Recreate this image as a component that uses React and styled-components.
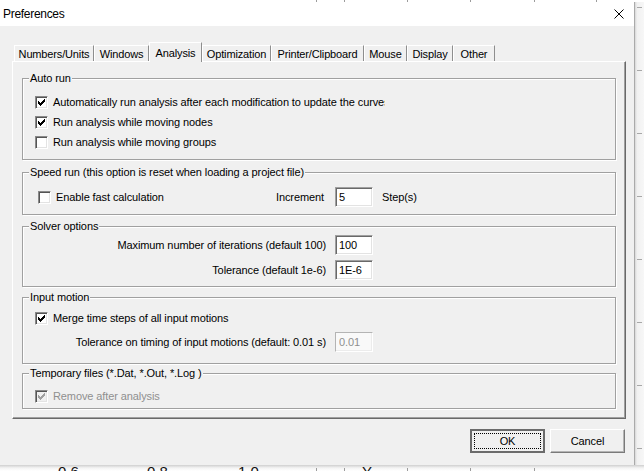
import React from 'react';
import styled, { createGlobalStyle } from 'styled-components';

const GlobalStyle = createGlobalStyle`
  html, body {
    margin: 0;
    padding: 0;
    background: #fff;
  }
  body {
    font-family: "Liberation Sans", Arial, sans-serif;
  }
`;

const Page = styled.div`
  width: 644px;
  height: 471px;
  overflow: hidden;
  display: grid;
  grid-template-columns: 635px 9px;
  grid-template-rows: 2px 463px 6px;
`;

const Edge = styled.svg`
  grid-column: 1 / 3;
  display: block;
`;

const Side = styled.svg`
  display: block;
  background: linear-gradient(to right, #d6d6d6, #f1f1f1 2px, #f7f7f7);
`;

const Dialog = styled.div`
  display: flex;
  flex-direction: column;
  background: #f0f0f0;
  border-right: 1px solid #aaaaaa;
  font-size: 11px;
  letter-spacing: -0.1px;
  color: #000;
`;

const TitleBar = styled.div`
  height: 24px;
  flex: none;
  background: #fff;
  display: flex;
  align-items: center;
  justify-content: space-between;
  padding: 0 10px 0 3px;
  font-size: 12px;
  letter-spacing: -0.3px;
`;

const Body = styled.div`
  flex: 1;
  display: flex;
  flex-direction: column;
  padding: 16px 8px 12px 12px;
`;

const TabRow = styled.div`
  display: flex;
  align-items: flex-end;
  height: 19px;
  padding-left: 2px;
  position: relative;
  z-index: 1;
`;

const Tab = styled.div`
  box-sizing: border-box;
  width: ${p => p.$w}px;
  height: ${p => (p.$active ? 20 : 16)}px;
  margin-bottom: ${p => (p.$active ? -1 : 0)}px;
  border-top: 1px solid #fff;
  border-left: 1px solid #fff;
  border-right: 1px solid #8e8e8e;
  background: #f0f0f0;
  display: flex;
  align-items: center;
  justify-content: center;
  white-space: nowrap;
  letter-spacing: -0.15px;
`;

const Panel = styled.div`
  box-sizing: border-box;
  height: 358px;
  border-top: 1px solid #fff;
  border-left: 1px solid #fff;
  border-right: 1px solid #696969;
  border-bottom: 1px solid #696969;
  box-shadow: inset -1px -1px 0 #a0a0a0;
  padding: 16px 9px 0 9px;
`;

const Group = styled.div`
  position: relative;
  margin-top: ${p => p.$mt || 0}px;
  border: 1px solid #a0a0a0;
  box-shadow: inset 1px 1px 0 #fff, 1px 1px 0 #fff;
  padding: ${p => p.$pad};
`;

const Caption = styled.div`
  position: absolute;
  top: -8px;
  left: 6px;
  padding: 0 1px;
  line-height: 14px;
  background: #f0f0f0;
  white-space: nowrap;
`;

const CheckRow = styled.div`
  display: flex;
  align-items: center;
  gap: 5px;
  height: 20px;
  padding-left: ${p => p.$indent ?? 12}px;
  width: ${p => (p.$w ? `${p.$w}px` : 'auto')};
  overflow: hidden;
  white-space: nowrap;
  color: ${p => (p.$disabled ? '#8f8f8f' : '#000')};
`;

const Box = styled.span`
  flex: none;
  box-sizing: border-box;
  width: 13px;
  height: 13px;
  border: 1px solid;
  border-color: #8a8a8a #fff #fff #8a8a8a;
  box-shadow: inset 1px 1px 0 #555, inset -1px -1px 0 #e3e3e3;
  background: ${p => (p.$disabled ? '#f0f0f0' : '#fff')};
  color: ${p => (p.$disabled ? '#a0a0a0' : '#000')};
  display: flex;
  align-items: center;
  justify-content: center;
`;

const FieldRow = styled.div`
  display: grid;
  grid-template-columns: 303px 38px auto;
  column-gap: 9px;
  align-items: center;
  height: 20px;
  margin-top: ${p => p.$mt || 0}px;
`;

const FieldLabel = styled.div`
  text-align: right;
  white-space: nowrap;
`;

const SplitCell = styled.div`
  display: flex;
  align-items: center;
  justify-content: space-between;
  padding-right: 2px;
`;

const Input = styled.input`
  box-sizing: border-box;
  width: 38px;
  height: 20px;
  margin: 0;
  padding: 0 0 0 3px;
  border: 1px solid;
  border-color: ${p => (p.disabled ? '#b4b4b4 #fff #fff #b4b4b4' : '#a0a0a0 #fff #fff #a0a0a0')};
  box-shadow: ${p =>
    p.disabled ? 'inset -1px -1px 0 #ececec' : 'inset 1px 1px 0 #696969, inset -1px -1px 0 #e3e3e3'};
  background: ${p => (p.disabled ? '#f9f9f9' : '#fff')};
  font: inherit;
  letter-spacing: inherit;
  color: #000;
  outline: none;
  &:disabled {
    color: #8f8f8f;
  }
`;

const ButtonRow = styled.div`
  display: flex;
  justify-content: flex-end;
  gap: 5px;
  margin: 10px 1px 0 0;
`;

const Button = styled.button`
  box-sizing: border-box;
  width: 75px;
  height: 24px;
  margin: 0;
  padding: 0;
  font: inherit;
  letter-spacing: inherit;
  color: #000;
  background: #f0f0f0;
  border: ${p => (p.$default ? '2px solid #6b6b6b' : '1px solid')};
  border-color: ${p => (p.$default ? '#6b6b6b' : '#fff #7a7a7a #7a7a7a #fff')};
  box-shadow: ${p => (p.$default ? 'none' : 'inset -1px -1px 0 #b4b4b4')};
  outline: ${p => (p.$default ? '1px dotted #000' : 'none')};
  outline-offset: -5px;
`;

const CHECK = ['......#', '.....##', '#...###', '##.###.', '#####..', '.###...', '..#....'];

function CheckMark() {
  return (
    <svg width="7" height="7" shapeRendering="crispEdges" fill="currentColor">
      {CHECK.flatMap((row, y) =>
        [...row].map((c, x) =>
          c === '#' ? <rect key={`${x}-${y}`} x={x} y={y} width="1" height="1" /> : null
        )
      )}
    </svg>
  );
}

function Check({ checked, disabled, label, indent, w }) {
  return (
    <CheckRow $indent={indent} $w={w} $disabled={disabled}>
      <Box $disabled={disabled}>{checked && <CheckMark />}</Box>
      <span>{label}</span>
    </CheckRow>
  );
}

const tabs = [
  ['Numbers/Units', 80],
  ['Windows', 55],
  ['Analysis', 53, true],
  ['Optimization', 69],
  ['Printer/Clipboard', 93],
  ['Mouse', 43],
  ['Display', 46],
  ['Other', 42],
];

const gridX = [316, 344, 407, 470, 534, 596];
const sideTicks = [5, 68, 131, 194, 257, 320, 383, 446];

function App() {
  return (
    <>
      <GlobalStyle />
      <Page>
        <Edge width="644" height="2">
          {gridX.map(x => (
            <rect key={x} x={x} y="0" width="1" height="2" fill="#9c9c9c" />
          ))}
        </Edge>

        <Dialog>
          <TitleBar>
            <span>Preferences</span>
            <svg width="10" height="10" viewBox="0 0 10 10">
              <path d="M0.5 0.5 L9.5 9.5 M9.5 0.5 L0.5 9.5" stroke="#000" strokeWidth="1" />
            </svg>
          </TitleBar>

          <Body>
            <TabRow>
              {tabs.map(([name, w, active]) => (
                <Tab key={name} $w={w} $active={active}>
                  {name}
                </Tab>
              ))}
            </TabRow>

            <Panel>
              <Group $pad="13px 0 7px">
                <Caption>Auto run</Caption>
                <Check checked w={350} label="Automatically run analysis after each modification to update the curves" />
                <Check checked label="Run analysis while moving nodes" />
                <Check label="Run analysis while moving groups" />
              </Group>

              <Group $mt={12} $pad="14px 0 7px">
                <Caption>Speed run (this option is reset when loading a project file)</Caption>
                <FieldRow>
                  <SplitCell>
                    <Check indent={15} label="Enable fast calculation" />
                    <span>Increment</span>
                  </SplitCell>
                  <Input defaultValue="5" />
                  <span>Step(s)</span>
                </FieldRow>
              </Group>

              <Group $mt={11} $pad="8px 0 6px">
                <Caption>Solver options</Caption>
                <FieldRow>
                  <FieldLabel>Maximum number of iterations (default 100)</FieldLabel>
                  <Input defaultValue="100" />
                </FieldRow>
                <FieldRow $mt={5}>
                  <FieldLabel>Tolerance (default 1e-6)</FieldLabel>
                  <Input defaultValue="1E-6" />
                </FieldRow>
              </Group>

              <Group $mt={10} $pad="10px 0 11px">
                <Caption>Input motion</Caption>
                <Check checked label="Merge time steps of all input motions" />
                <FieldRow $mt={4}>
                  <FieldLabel>Tolerance on timing of input motions (default: 0.01 s)</FieldLabel>
                  <Input defaultValue="0.01" disabled />
                </FieldRow>
              </Group>

              <Group $mt={9} $pad="12px 0 2px">
                <Caption>Temporary files (*.Dat, *.Out, *.Log )</Caption>
                <Check checked disabled label="Remove after analysis" />
              </Group>
            </Panel>

            <ButtonRow>
              <Button $default>OK</Button>
              <Button>Cancel</Button>
            </ButtonRow>
          </Body>
        </Dialog>

        <Side width="9" height="463">
          {sideTicks.map(y => (
            <rect key={y} x="2" y={y} width="5" height="1" fill="#a8a8a8" />
          ))}
        </Side>

        <Edge width="644" height="6">
          <defs>
            <linearGradient id="shade" x1="0" y1="0" x2="0" y2="1">
              <stop offset="0" stopColor="#cfcfcf" />
              <stop offset="0.5" stopColor="#f4f4f4" />
              <stop offset="1" stopColor="#fff" />
            </linearGradient>
          </defs>
          <rect x="0" y="0" width="644" height="6" fill="url(#shade)" />
          <g fontFamily="Liberation Sans, Arial, sans-serif" fontSize="15" fill="#111">
            <text x="58" y="12">0.6</text>
            <text x="147" y="12">0.8</text>
            <text x="238" y="12">1.0</text>
            <text x="362" y="12">Y</text>
          </g>
          {gridX.slice(0, 5).map(x => (
            <rect key={x} x={x} y="3" width="1" height="3" fill="#9c9c9c" />
          ))}
        </Edge>
      </Page>
    </>
  );
}

export default App;
